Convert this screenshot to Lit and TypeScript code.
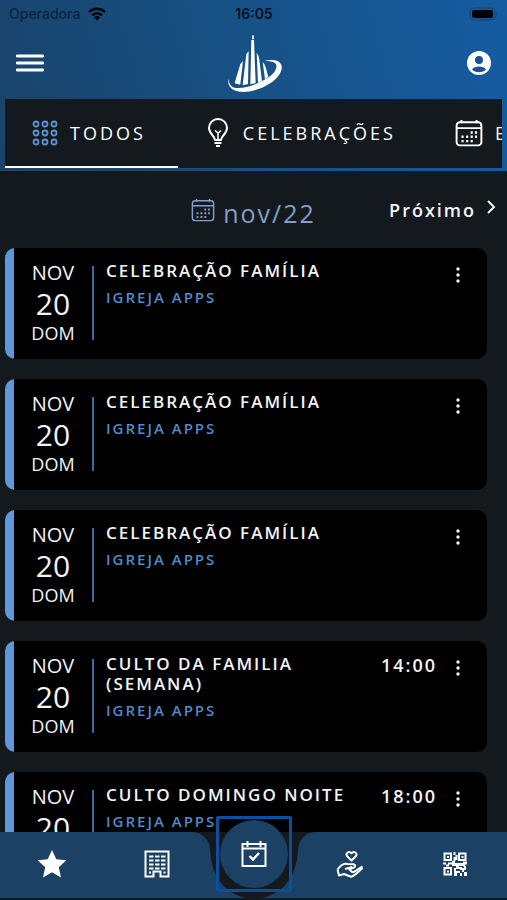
import { LitElement, html, css, svg } from "lit";
import { customElement, property } from "lit/decorators.js";

const calendarDots = svg`
  <rect x="1.5" y="3" width="23" height="21.5" rx="3" />
  <path d="M1.5 8.5h23M6 1v3M20 1v3" />
  <path
    d="M14.5 12.5h2M18.5 12.5h2M6 16.5h2M10.3 16.5h2M14.5 16.5h2M18.5 16.5h2M6 20.5h2M10.3 20.5h2M14.5 20.5h2"
    stroke-width="2.2"
  />
`;

const icons = {
  wifi: html`<svg viewBox="0 0 18 14" width="18" height="14" aria-hidden="true">
    <g fill="none" stroke="currentColor" stroke-width="2.4">
      <path d="M1 5a11.5 11.5 0 0 1 16 0" />
      <path d="M4 8.4a7.2 7.2 0 0 1 10 0" />
    </g>
    <path d="M9 13.4 6 10.4a4.3 4.3 0 0 1 6 0z" fill="currentColor" />
  </svg>`,
  battery: html`<svg viewBox="0 0 30 14" width="30" height="14" aria-hidden="true">
    <rect x="1" y="1" width="25" height="12" rx="4" fill="none" stroke="#114377" />
    <rect x="3" y="3" width="21" height="8" rx="2" fill="#000" />
    <path d="M27.5 5v4c1.600-.5 1.600-3.500 0-4z" fill="#114377" />
  </svg>`,
  menu: html`<svg viewBox="0 0 28 20" width="28" height="20" aria-hidden="true">
    <path d="M1 3h26M1 10h26M1 17h26" stroke="currentColor" stroke-width="2.800" stroke-linecap="round" />
  </svg>`,
  logo: html`<svg viewBox="0 0 240 210" width="80" height="70" role="img" aria-label="Igreja Apps">
    <g fill="#fff">
      <path d="M115 22h4l1 12h-6zM112 36h8l5 129q-8 3-16 4z" />
      <path d="M97 78l7-8-2 98q-8 3-16 3z" />
      <path d="M79 108l8-9-8 70q-9 1-17-4z" />
      <path d="M128 74q7 8 8 22l8 63-12 6z" />
      <path d="M146 102q7 6 9 16l8 29-10 7z" />
      <path
        d="M44 152c-4 18 4 32 26 38 34 7 84-8 114-36 22-21 26-44 8-54-11-5-26-5-41-1 14-1 28 1 34 8 8 12-4 32-31 47-32 19-71 30-93 25-10-3-16-12-17-27z"
      />
    </g>
  </svg>`,
  user: html`<svg viewBox="0 0 24 24" width="24" height="24" aria-hidden="true">
    <circle cx="12" cy="12" r="12" fill="#fff" />
    <circle cx="12" cy="9" r="4" fill="#17548f" />
    <path d="M5 18.500c2-4 12-4 14 0-3 3.500-11 3.500-14 0z" fill="#17548f" />
  </svg>`,
  grid: html`<svg viewBox="0 0 26 26" width="26" height="26" aria-hidden="true">
    <g fill="none" stroke="#5c93d3" stroke-width="1.800">
      ${[4, 13, 22].map((y) => [4, 13, 22].map((x) => svg`<circle cx=${x} cy=${y} r="2.500" />`))}
    </g>
  </svg>`,
  bulb: html`<svg viewBox="0 0 26 30" width="26" height="30" aria-hidden="true">
    <g fill="none" stroke="currentColor" stroke-width="2" stroke-linejoin="round">
      <path d="M10 22c0-4-6-6-6-12a9 9 0 0 1 18 0c0 6-6 8-6 12z" />
      <path d="M13 22v-7M10 12.500l3 2.500 3-2.500" stroke-width="1.600" />
      <path d="M9.500 25h7M11 28h4" />
    </g>
  </svg>`,
  calendar: html`<svg viewBox="0 0 26 26" width="28" height="28" aria-hidden="true">
    <g fill="none" stroke="currentColor" stroke-width="1.800" stroke-linecap="butt">${calendarDots}</g>
  </svg>`,
  month: html`<svg viewBox="0 0 26 26" width="24" height="24" aria-hidden="true">
    <g fill="none" stroke="currentColor" stroke-width="1.600">${calendarDots}</g>
  </svg>`,
  chevron: html`<svg viewBox="0 0 10 16" width="10" height="16" aria-hidden="true">
    <path d="M2 2l6 6-6 6" fill="none" stroke="currentColor" stroke-width="2" />
  </svg>`,
  more: html`<svg viewBox="0 0 4 18" width="4" height="18" aria-hidden="true">
    <g fill="currentColor">
      <circle cx="2" cy="3" r="1.700" />
      <circle cx="2" cy="9" r="1.700" />
      <circle cx="2" cy="15" r="1.700" />
    </g>
  </svg>`,
  star: html`<svg viewBox="0 0 30 30" width="30" height="30" aria-hidden="true">
    <path d="M15 1l4.300 9.300 10 1-7.500 7 2.200 10.200-9-5.300-9 5.300 2.200-10.200-7.500-7 10-1z" fill="currentColor" />
  </svg>`,
  building: html`<svg viewBox="0 0 26 28" width="26" height="28" aria-hidden="true">
    <path d="M1.500 1.500h23v25h-8v-5h-7v5h-8z" fill="none" stroke="currentColor" stroke-width="2" />
    <path
      d="M5 6.500h4.500M11 6.500h4.500M17 6.500h4.500M5 10.500h4.500M11 10.500h4.500M17 10.500h4.500M5 14.500h4.500M11 14.500h4.500M17 14.500h4.500M5 18.500h4.500M11 18.500h4.500M17 18.500h4.500M5 22.500h2M19.500 22.500h2"
      stroke="currentColor"
      stroke-width="2.200"
    />
  </svg>`,
  agenda: html`<svg viewBox="0 0 28 28" width="28" height="28" aria-hidden="true">
    <g fill="none" stroke="currentColor" stroke-width="2">
      <path d="M2.500 4h23v22h-23zM2.500 8.500h23M7.500 1v6M20.500 1v6" />
      <path d="M9.500 16l3.500 3.500 6-6.500" stroke-width="2.400" />
    </g>
  </svg>`,
  giving: html`<svg viewBox="0 0 28 28" width="28" height="28" aria-hidden="true">
    <g fill="none" stroke="currentColor" stroke-width="2" stroke-linejoin="round">
      <path d="M15.500 10.500l-4.500-4.500c-1.700-3 2-5.500 4.500-2.700 2.500-2.800 6.200-.3 4.500 2.700z" />
      <path d="M1.500 19.500c4-5.500 7-6.500 10-5.500l6 .2c2.500.6 2 3-.2 3.600l-4 1.500 2 2c1 1 2.500 1 3.700 0l7.500-5" />
      <path d="M1.500 19.500l1.500 6 5-1.500 7 2.800c3-.6 6-3.300 11.500-8.800" />
      <path d="M9 19l7-2" />
    </g>
  </svg>`,
  qr: html`<svg viewBox="0 0 24 24" width="24" height="24" aria-hidden="true">
    <g fill="none" stroke="currentColor" stroke-width="2">
      <path d="M1.500 1.500h6.500v6.500h-6.500zM16 1.500h6.500v6.500h-6.500zM1.500 16h6.500v6.500h-6.500z" />
    </g>
    <path
      fill="currentColor"
      d="M4 4h2v2h-2zM18.500 4h2v2h-2zM4 18.500h2v2h-2zM10.500 0h2v3h-2zM12.500 3h2v5h-2zM10.500 5h2v4h-2zM0 10.500h3v2h-3zM3 12.500h3v2h-3zM5 10.500h5v2h-5zM9 9h3v2h8v3h-4v3h-3v-3h-4zM20 9.500h4v3h-2v2h-2zM11 16h2v3h4v2h-3v3h-3zM15 15h4v3h-2v-1h-2zM19 16h2v-2h2v4h-2v2h-2zM17 21h2v3h-2zM21 20h3v4h-3z"
    />
  </svg>`,
};

interface ChurchEvent {
  month: string;
  day: string;
  weekday: string;
  title: string;
  place: string;
  time?: string;
}

const sunday = { month: "NOV", day: "20", weekday: "DOM", place: "IGREJA APPS" };

const events: ChurchEvent[] = [
  { ...sunday, title: "CELEBRAÇÃO FAMÍLIA" },
  { ...sunday, title: "CELEBRAÇÃO FAMÍLIA" },
  { ...sunday, title: "CELEBRAÇÃO FAMÍLIA" },
  { ...sunday, title: "CULTO DA FAMILIA (SEMANA)", time: "14:00" },
  { ...sunday, title: "CULTO DOMINGO NOITE", time: "18:00" },
];

const reset = css`
  * {
    box-sizing: border-box;
  }
  svg {
    display: block;
    flex: none;
  }
  button {
    margin: 0;
    padding: 0;
    border: 0;
    background: none;
    color: inherit;
    font: inherit;
    letter-spacing: inherit;
  }
  a {
    color: inherit;
    text-decoration: none;
  }
`;

@customElement("app-header")
export class AppHeader extends LitElement {
  static styles = [
    reset,
    css`
      :host {
        display: block;
        flex: none;
        padding: 0 5px 3px;
        background: linear-gradient(75deg, #19436a, #175083 45%, #155ca1);
        color: #fff;
      }
      .status {
        display: grid;
        grid-template-columns: 1fr auto 1fr;
        align-items: center;
        height: 28px;
        padding: 0 3px 0 4px;
        font: 500 14px/20px Inter, "Liberation Sans", sans-serif;
        color: #0a2540;
      }
      .carrier {
        display: flex;
        align-items: center;
        gap: 8px;
      }
      .carrier svg {
        color: #000;
      }
      .clock {
        font-weight: 600;
        color: #04121f;
      }
      .battery {
        justify-self: end;
      }
      .bar {
        display: grid;
        grid-template-columns: 1fr auto 1fr;
        align-items: center;
        height: 71px;
        padding: 0 11px 8px;
      }
      .bar button {
        justify-self: start;
      }
      .bar .account {
        justify-self: end;
      }
      .tabs {
        display: flex;
        height: 69px;
        overflow: hidden;
        background: #14191d;
      }
      .tab {
        display: flex;
        flex: none;
        align-items: center;
        gap: 12px;
        padding: 0 32px 0 27px;
        border-bottom: 2px solid transparent;
        font-weight: 500;
        font-size: 18px;
        letter-spacing: 3px;
      }
      .active {
        border-color: #fff;
      }
    `,
  ];

  render() {
    return html`
      <div class="status">
        <span class="carrier">Operadora ${icons.wifi}</span>
        <span class="clock">16:05</span>
        <span class="battery">${icons.battery}</span>
      </div>
      <div class="bar">
        <button aria-label="Menu">${icons.menu}</button>
        <span class="logo">${icons.logo}</span>
        <button class="account" aria-label="Conta">${icons.user}</button>
      </div>
      <div class="tabs" role="tablist">
        <button class="tab active" role="tab" aria-selected="true">${icons.grid}TODOS</button>
        <button class="tab" role="tab" aria-selected="false">${icons.bulb}CELEBRAÇÕES</button>
        <button class="tab" role="tab" aria-selected="false">${icons.calendar}EVENTOS</button>
      </div>
    `;
  }
}

@customElement("event-card")
export class EventCard extends LitElement {
  @property({ attribute: false }) event!: ChurchEvent;

  static styles = [
    reset,
    css`
      :host {
        display: block;
      }
      .card {
        display: flex;
        align-items: flex-start;
        min-height: 111px;
        padding: 13px 27px 12px 9px;
        border-radius: 10px;
        background: linear-gradient(90deg, #5f98da 9px, #000 9px);
      }
      .date {
        display: flex;
        flex: none;
        flex-direction: column;
        align-items: center;
        width: 78px;
        font-size: 20px;
        line-height: 24px;
      }
      .day {
        font-size: 30px;
        line-height: 38px;
      }
      .weekday {
        font-size: 18px;
        line-height: 20px;
      }
      .details {
        flex: 1;
        margin-top: 5px;
        min-height: 74px;
        padding-left: 12px;
        border-left: 2px solid #3a6ca3;
      }
      .title,
      .place,
      .time {
        margin: 0;
        font-weight: 600;
        font-size: 17px;
        line-height: 20px;
        letter-spacing: 2px;
      }
      .title {
        margin-top: -5px;
      }
      .place {
        margin-top: 6px;
        font-size: 15px;
        color: #5289c8;
      }
      .time {
        padding: 1px 19px 0 0;
        font-size: 18px;
      }
      .more {
        padding-top: 5px;
      }
    `,
  ];

  render() {
    const e = this.event;
    return html`
      <article class="card">
        <div class="date">
          <span>${e.month}</span>
          <span class="day">${e.day}</span>
          <span class="weekday">${e.weekday}</span>
        </div>
        <div class="details">
          <h2 class="title">${e.title}</h2>
          <p class="place">${e.place}</p>
        </div>
        ${e.time ? html`<time class="time">${e.time}</time>` : ""}
        <button class="more" aria-label="Mais opções">${icons.more}</button>
      </article>
    `;
  }
}

@customElement("bottom-nav")
export class BottomNav extends LitElement {
  static styles = [
    reset,
    css`
      :host {
        display: block;
        flex: none;
        position: relative;
        border-bottom: 2px solid #14191d;
        color: #fff;
      }
      .nav {
        display: flex;
        height: 66px;
        background: #14191d;
      }
      .side {
        display: flex;
        flex: 1;
        padding-bottom: 2px;
        background: #1b4165;
      }
      .left {
        border-top-right-radius: 18px;
      }
      .right {
        border-top-left-radius: 18px;
      }
      .link {
        display: flex;
        flex: 1;
        align-items: center;
        justify-content: center;
      }
      .current {
        position: absolute;
        left: 50%;
        top: -16px;
        display: flex;
        padding: 1px;
        border: 3px solid #0b4f9e;
        border-radius: 2px;
        transform: translateX(-50%);
      }
      .disc {
        display: flex;
        align-items: center;
        justify-content: center;
        width: 68px;
        height: 68px;
        border-radius: 50%;
        background: #1b4165;
      }
    `,
  ];

  render() {
    return html`
      <nav class="nav">
        <div class="side left">
          <a class="link" href="#favoritos" aria-label="Favoritos">${icons.star}</a>
          <a class="link" href="#igrejas" aria-label="Igrejas">${icons.building}</a>
        </div>
        <svg viewBox="0 0 88 66" width="88" height="66" aria-hidden="true">
          <path d="M0 17C1 44 14 61 36 66H0zM88 17C87 44 74 61 52 66H88z" fill="#1b4165" />
        </svg>
        <div class="side right">
          <a class="link" href="#doar" aria-label="Doar">${icons.giving}</a>
          <a class="link" href="#qrcode" aria-label="QR Code">${icons.qr}</a>
        </div>
      </nav>
      <a class="current" href="#agenda" aria-label="Agenda" aria-current="page">
        <span class="disc">${icons.agenda}</span>
      </a>
    `;
  }
}

@customElement("app-root")
export class AppRoot extends LitElement {
  static styles = [
    reset,
    css`
      :host {
        display: flex;
        flex-direction: column;
        height: 100vh;
        background: #14191d;
        color: #f4f4f4;
        font-family: "Open Sans", "Noto Sans", sans-serif;
      }
      .month-bar {
        display: grid;
        flex: none;
        grid-template-columns: 1fr auto 1fr;
        align-items: center;
        height: 77px;
        padding: 0 11px;
      }
      .month {
        display: flex;
        grid-column: 2;
        align-items: center;
        gap: 8px;
        margin: 0;
        font-weight: 500;
        font-size: 25px;
        line-height: 32px;
        letter-spacing: 2px;
        color: #829fca;
      }
      .month span {
        padding-top: 6px;
      }
      .next {
        display: flex;
        justify-self: end;
        align-items: center;
        gap: 10px;
        font-weight: 600;
        font-size: 18px;
        line-height: 24px;
        letter-spacing: 2px;
      }
      .next svg {
        margin-bottom: 6px;
      }
      .events {
        display: flex;
        flex: 1;
        flex-direction: column;
        gap: 20px;
        min-height: 0;
        padding: 0 20px 0 5px;
        overflow-y: auto;
        scrollbar-width: none;
      }
    `,
  ];

  render() {
    return html`
      <app-header></app-header>
      <div class="month-bar">
        <h1 class="month">${icons.month}<span>nov/22</span></h1>
        <button class="next">Próximo ${icons.chevron}</button>
      </div>
      <main class="events">${events.map((e) => html`<event-card .event=${e}></event-card>`)}</main>
      <bottom-nav></bottom-nav>
    `;
  }
}
